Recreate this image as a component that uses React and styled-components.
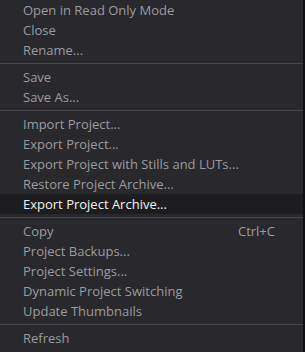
import styled, { createGlobalStyle } from 'styled-components';

const GlobalStyle = createGlobalStyle`
html, body {
  margin: 0;
  padding: 0;
  background: #0f0f11;
}
`

const Page = styled.div`
display: flex;
width: 305px;
height: 352px;
overflow: hidden;
`

const Menu = styled.div`
width: 303px;
background-color: #28282d;
font-family: "Open Sans", "Noto Sans", sans-serif;
font-size: 13px;
color: #9c9c9f;
`

const Item = styled.div`
display: flex;
align-items: center;
justify-content: space-between;
height: 20px;
padding: 0 28px 0 23px;
background-color: ${props => props.$active ? '#1d1d1f' : 'transparent'};
color: ${props => props.$active ? '#f2f2f2' : 'inherit'};
white-space: nowrap;
`

const Shortcut = styled.span`
color: #9c9c9f;
`

const Separator = styled.div`
height: 1px;
margin: 3px 0;
background-color: #46464b;
`

const groups = [
  ['Open in Read Only Mode', 'Close', 'Rename...'],
  ['Save', 'Save As...'],
  ['Import Project...', 'Export Project...', 'Export Project with Stills and LUTs...', 'Restore Project Archive...', 'Export Project Archive...'],
  ['Copy', 'Project Backups...', 'Project Settings...', 'Dynamic Project Switching', 'Update Thumbnails'],
  ['Refresh'],
]

const shortcuts = { 'Copy': 'Ctrl+C' }

function App() {
  return (
    <Page>
      <GlobalStyle />
      <Menu>
        {groups.map((group, i) => (
          <div key={i}>
            {i > 0 && <Separator />}
            {group.map(label => (
              <Item key={label} $active={label === 'Export Project Archive...'}>
                <span>{label}</span>
                {shortcuts[label] && <Shortcut>{shortcuts[label]}</Shortcut>}
              </Item>
            ))}
          </div>
        ))}
      </Menu>
    </Page>
  );
}

export default App;
